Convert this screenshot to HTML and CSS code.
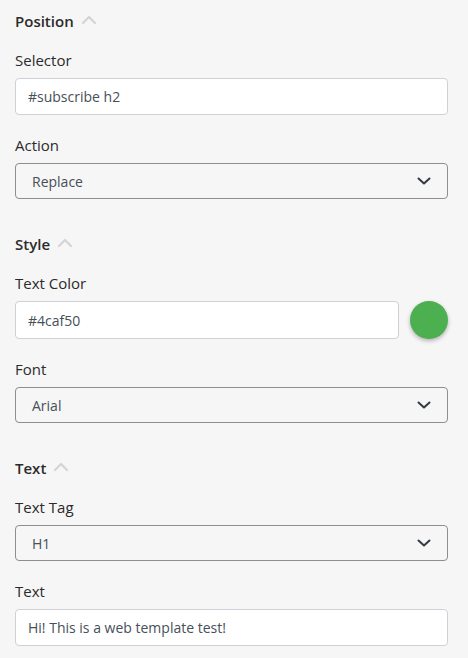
FILE: index.html
```html
<!DOCTYPE html>
<html>
<head>
<meta charset="utf-8">
<link rel="stylesheet" href="styles.css">
</head>
<body>
<div class="panel">
  <section class="section">
    <h3 class="sec-head">Position <svg class="up" viewBox="0 0 16 10" width="16" height="10"><polyline points="2,8 8,2 14,8"/></svg></h3>
    <label class="label">Selector</label>
    <div class="input">#subscribe h2</div>
    <label class="label">Action</label>
    <div class="select">Replace <svg class="down" viewBox="0 0 14 8" width="14" height="8"><polyline points="1.5,1.5 7,6.5 12.5,1.5"/></svg></div>
  </section>
  <section class="section">
    <h3 class="sec-head">Style <svg class="up" viewBox="0 0 16 10" width="16" height="10"><polyline points="2,8 8,2 14,8"/></svg></h3>
    <label class="label">Text Color</label>
    <div class="color-row">
      <div class="input grow">#4caf50</div>
      <div class="swatch"></div>
    </div>
    <label class="label">Font</label>
    <div class="select">Arial <svg class="down" viewBox="0 0 14 8" width="14" height="8"><polyline points="1.5,1.5 7,6.5 12.5,1.5"/></svg></div>
  </section>
  <section class="section">
    <h3 class="sec-head">Text <svg class="up" viewBox="0 0 16 10" width="16" height="10"><polyline points="2,8 8,2 14,8"/></svg></h3>
    <label class="label">Text Tag</label>
    <div class="select">H1 <svg class="down" viewBox="0 0 14 8" width="14" height="8"><polyline points="1.5,1.5 7,6.5 12.5,1.5"/></svg></div>
    <label class="label">Text</label>
    <div class="input">Hi! This is a web template test!</div>
  </section>
</div>
</body>
</html>
```
FILE: styles.css
```css
* { box-sizing: border-box; }
html, body { margin: 0; padding: 0; }
body {
  background: #f6f6f6;
  font-family: "Open Sans", "Noto Sans", "DejaVu Sans", sans-serif;
  color: #2b2b2b;
  width: 468px;
  height: 658px;
  overflow: hidden;
}
.panel {
  padding: 9px 20px 0 15px;
}
.section {
  display: flex;
  flex-direction: column;
  margin-bottom: 13px;
}
.sec-head {
  margin: 0 0 17px 0;
  font-size: 15px;
  font-weight: 600;
  line-height: 24px;
  height: 24px;
  display: flex;
  align-items: center;
  gap: 7px;
  color: #2b2b2b;
}
.up {
  fill: none;
  stroke: #d4d4d6;
  stroke-width: 2.2;
  stroke-linecap: round;
  stroke-linejoin: round;
  margin-top: -3px;
}
.label {
  display: block;
  font-size: 15px;
  font-weight: 500;
  line-height: 20px;
  margin-bottom: 8px;
  color: #2b2b2b;
}
.input {
  height: 37px;
  background: #fff;
  border: 1px solid #ced1d8;
  border-radius: 4px;
  padding: 0 12px;
  display: flex;
  align-items: center;
  font-size: 14px;
  color: #474f57;
  margin-bottom: 20px;
}
.select {
  height: 36px;
  background: transparent;
  border: 1px solid #8e8e8e;
  border-radius: 4px;
  padding: 0 16px 0 16px;
  display: flex;
  align-items: center;
  justify-content: space-between;
  font-size: 14px;
  color: #474f57;
  margin-bottom: 20px;
}
.down {
  fill: none;
  stroke: #343a40;
  stroke-width: 2;
  stroke-linecap: round;
  stroke-linejoin: round;
}
.color-row {
  display: flex;
  align-items: center;
  gap: 11px;
  margin-bottom: 20px;
}
.color-row .input {
  margin-bottom: 0;
  height: 38px;
}
.grow { flex: 1; }
.swatch {
  width: 38px;
  height: 38px;
  border-radius: 50%;
  background: #4caf50;
  box-shadow: 0 2px 4px rgba(0,0,0,0.28);
  flex-shrink: 0;
}
```
